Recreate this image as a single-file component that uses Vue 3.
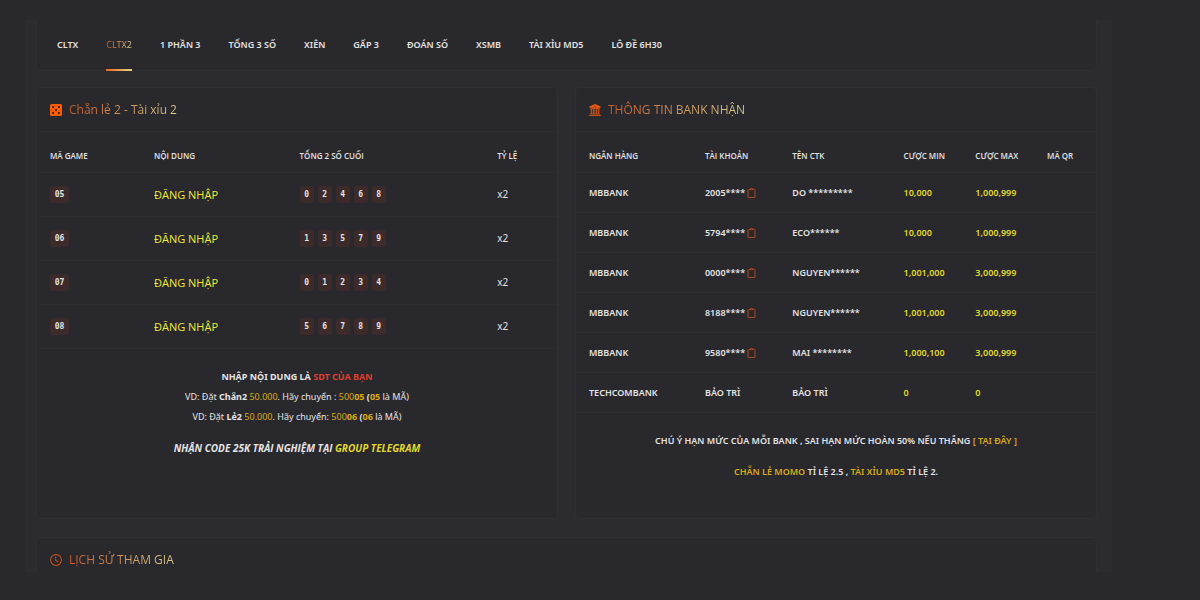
<script setup>
import { ref } from 'vue'

const tabs = ['CLTX', 'CLTX2', '1 PHẦN 3', 'TỔNG 3 SỐ', 'XIÊN', 'GẤP 3', 'ĐOÁN SỐ', 'XSMB', 'TÀI XỈU MD5', 'LÔ ĐỀ 6H30']
const active = ref('CLTX2')

const games = [
  { code: '05', digits: ['0', '2', '4', '6', '8'] },
  { code: '06', digits: ['1', '3', '5', '7', '9'] },
  { code: '07', digits: ['0', '1', '2', '3', '4'] },
  { code: '08', digits: ['5', '6', '7', '8', '9'] },
]

const banks = [
  { bank: 'MBBANK', account: '2005****', owner: 'DO *********', min: '10,000', max: '1,000,999', copy: true },
  { bank: 'MBBANK', account: '5794****', owner: 'ECO******', min: '10,000', max: '1,000,999', copy: true },
  { bank: 'MBBANK', account: '0000****', owner: 'NGUYEN******', min: '1,001,000', max: '3,000,999', copy: true },
  { bank: 'MBBANK', account: '8188****', owner: 'NGUYEN******', min: '1,001,000', max: '3,000,999', copy: true },
  { bank: 'MBBANK', account: '9580****', owner: 'MAI ********', min: '1,000,100', max: '3,000,999', copy: true },
  { bank: 'TECHCOMBANK', account: 'BẢO TRÌ', owner: 'BẢO TRÌ', min: '0', max: '0', copy: false },
]
</script>

<template>
  <div class="page">
    <main class="shell">
      <nav class="tabs">
        <button
          v-for="tab in tabs"
          :key="tab"
          type="button"
          class="tab"
          :class="{ active: tab === active }"
          @click="active = tab"
        ><span>{{ tab }}</span></button>
      </nav>

      <div class="panels">
        <section class="panel">
          <h2 class="title">
            <svg class="icon" viewBox="0 0 16 16" aria-hidden="true">
              <rect width="16" height="16" rx="2" fill="#ff5c00" />
              <g fill="#2b1c18">
                <rect x="2.8" y="2.8" width="2.6" height="2.6" rx="1" />
                <rect x="10.6" y="2.8" width="2.6" height="2.6" rx="1" />
                <rect x="6.7" y="6.7" width="2.6" height="2.6" rx="1" />
                <rect x="2.8" y="10.6" width="2.6" height="2.6" rx="1" />
                <rect x="10.6" y="10.6" width="2.6" height="2.6" rx="1" />
              </g>
            </svg>
            <span class="gradient">Chẵn lẻ 2 - Tài xỉu 2</span>
          </h2>
          <table class="games">
            <thead>
              <tr><th>MÃ GAME</th><th>NỘI DUNG</th><th>TỔNG 2 SỐ CUỐI</th><th>TỶ LỆ</th></tr>
            </thead>
            <tbody>
              <tr v-for="game in games" :key="game.code">
                <td><code class="chip wide">{{ game.code }}</code></td>
                <td><a href="#" class="login">ĐĂNG NHẬP</a></td>
                <td><div class="digits"><code v-for="d in game.digits" :key="d" class="chip">{{ d }}</code></div></td>
                <td>x2</td>
              </tr>
            </tbody>
          </table>
          <div class="guide">
            <p><b>NHẬP NỘI DUNG LÀ <span class="red">SDT CỦA BẠN</span></b></p>
            <p>VD: Đặt <b>Chẵn2</b> <span class="gold">50.000</span>. Hãy chuyển : <span class="gold">500<b>05</b></span> <b>(<span class="gold">05</span></b> là MÃ)</p>
            <p>VD: Đặt <b>Lẻ2</b> <span class="gold">50.000</span>. Hãy chuyển: <span class="gold">500<b>06</b></span> <b>(<span class="gold">06</span></b> là MÃ)</p>
            <p class="promo">NHẬN CODE 25K TRẢI NGHIỆM TẠI <a href="#" class="yellow">GROUP TELEGRAM</a></p>
          </div>
        </section>

        <section class="panel">
          <h2 class="title">
            <svg class="icon" viewBox="0 0 16 16" fill="#f05a10" aria-hidden="true">
              <path d="M8 0 L15.4 3.2 V5 H0.6 V3.2 Z M1.6 5.5 H14.4 V6.6 H1.6 Z" />
              <path d="M2.2 6.5 H4.3 V13 H2.2 Z M5.3 6.5 H7.3 V13 H5.3 Z M8.7 6.5 H10.7 V13 H8.7 Z M11.7 6.5 H13.8 V13 H11.7 Z" opacity=".75" />
              <path d="M1.2 12.8 H14.8 V14 H1.2 Z M0 14.6 H16 V16 H0 Z" opacity=".8" />
              <circle cx="8" cy="3" r="0.9" fill="#6b2c16" />
            </svg>
            <span class="gradient">THÔNG TIN BANK NHẬN</span>
          </h2>
          <table class="banks">
            <thead>
              <tr><th>NGÂN HÀNG</th><th>TÀI KHOẢN</th><th>TÊN CTK</th><th>CƯỢC MIN</th><th>CƯỢC MAX</th><th>MÃ QR</th></tr>
            </thead>
            <tbody>
              <tr v-for="row in banks" :key="row.bank + row.account">
                <td>{{ row.bank }}</td>
                <td>{{ row.account }}<button v-if="row.copy" type="button" class="copy" aria-label="Copy">
                  <svg viewBox="0 0 9 10" fill="none" stroke="#b3481f" aria-hidden="true">
                    <path d="M3 1.5 H1.5 L1 2 V9 L1.5 9.5 H7.5 L8 9 V2 L7.5 1.5 H6" />
                    <path d="M3 1 H6" stroke-width="1.6" />
                  </svg>
                </button></td>
                <td>{{ row.owner }}</td>
                <td class="yellow">{{ row.min }}</td>
                <td class="yellow">{{ row.max }}</td>
                <td></td>
              </tr>
            </tbody>
          </table>
          <div class="notice">
            <p>CHÚ Ý HẠN MỨC CỦA MỖI BANK , SAI HẠN MỨC HOÀN 50% NẾU THẮNG <a href="#" class="gold">[ TẠI ĐÂY ]</a></p>
            <p><a href="#" class="gold">CHẴN LẺ MOMO</a> TỈ LỆ 2.5 , <a href="#" class="gold">TÀI XỈU MD5</a> TỈ LỆ 2.</p>
          </div>
        </section>
      </div>

      <section class="panel history">
        <h2 class="title">
          <svg class="icon" viewBox="0 0 16 16" fill="none" stroke="#c94e1c" stroke-width="1.4" stroke-linecap="round" aria-hidden="true">
            <circle cx="8" cy="8" r="7.2" />
            <path d="M7.6 4 V8.6 L10.8 10.4" />
          </svg>
          <span class="gradient">LỊCH SỬ THAM GIA</span>
        </h2>
      </section>
    </main>
  </div>
</template>

<style>
body {
  background: #29282d;
}
</style>

<style scoped>
.page {
  padding: 20px 88px 28px 25px;
  font-family: "Noto Sans", "Open Sans", sans-serif;
  font-size: 9px;
  color: #e4e4e4;
  background: #29282d;
}
.shell {
  padding: 0 15px 0 11px;
  background: #2c2b30;
}
.tabs {
  display: flex;
  gap: 28px;
  padding: 0 20px;
  border: 1px solid #302f34;
  border-top: 0;
  border-radius: 0 0 5px 5px;
  background: #29282d;
}
.tab {
  height: 51px;
  margin-bottom: -1px;
  padding: 0;
  border: 0;
  border-bottom: 2px solid transparent;
  background: none;
  font: 600 9px/48px "Noto Sans", "Open Sans", sans-serif;
  color: #e4e4e4;
  white-space: nowrap;
  cursor: pointer;
}
.tab.active {
  font-weight: 400;
  border-image: linear-gradient(90deg, #e8641c, #e6d98a) 1;
}
.tab.active span,
.gradient {
  background: linear-gradient(90deg, #c85a28, #d8cc8c);
  background-clip: text;
  -webkit-background-clip: text;
  color: transparent;
}
.panels {
  display: grid;
  grid-template-columns: 1fr 1fr;
  gap: 17px;
  margin: 16px 0 18px;
}
.panel {
  border: 1px solid #302f34;
  border-radius: 5px;
  background: #29282d;
}
.title {
  display: flex;
  align-items: center;
  gap: 7px;
  height: 43px;
  margin: 0;
  padding: 0 13px;
  font: 400 12px "Open Sans", "Noto Sans", sans-serif;
  border-bottom: 1px solid #2d2c31;
}
.icon {
  width: 12px;
  height: 12px;
}
table {
  width: 100%;
  table-layout: fixed;
  border-collapse: collapse;
}
th,
td {
  padding: 0 0 0 13px;
  border-bottom: 1px solid #2d2c31;
  text-align: left;
  white-space: nowrap;
}
th {
  height: 40px;
  padding-top: 7px;
  box-sizing: border-box;
  font: 600 8px "Open Sans", "Noto Sans", sans-serif;
}
.games td {
  height: 43px;
}
.games td:last-child {
  font-size: 10px;
}
.games th:nth-child(1) { width: 20%; }
.games th:nth-child(2) { width: 28%; }
.games th:nth-child(3) { width: 38%; }
.banks th:nth-child(1) { width: 22.3%; }
.banks th:nth-child(2) { width: 16.8%; }
.banks th:nth-child(3) { width: 21.4%; }
.banks th:nth-child(4),
.banks th:nth-child(5) { width: 13.8%; }
.banks td {
  height: 39px;
  font-weight: 600;
}
.chip {
  display: inline-block;
  width: 14px;
  border-radius: 3px;
  background: #3c2b2a;
  font: 700 8px/17px "DejaVu Sans Mono", monospace;
  text-align: center;
  vertical-align: middle;
}
.chip.wide {
  width: 19px;
}
.digits {
  display: flex;
  gap: 4px;
}
a {
  text-decoration: none;
}
.login {
  font: 400 11px "Open Sans", "Noto Sans", sans-serif;
  color: #f0ea3c;
}
.yellow {
  color: #e0d82c;
}
.gold {
  color: #d9ab16;
}
.red {
  color: #e03c2c;
}
.copy {
  width: 9px;
  height: 10px;
  margin-left: 2px;
  padding: 0;
  border: 0;
  background: none;
  vertical-align: middle;
  cursor: pointer;
}
.copy svg {
  display: block;
  width: 9px;
  height: 10px;
}
.guide,
.notice {
  text-align: center;
}
.guide {
  padding-top: 18px;
}
.guide p {
  margin: 0;
  line-height: 20px;
}
.guide .promo {
  margin-top: 11px;
  font: italic 700 10px/20px "Open Sans", "Noto Sans", sans-serif;
}
.notice {
  padding: 18px 0 25px;
  font-weight: 600;
}
.notice p {
  margin: 0 0 11px;
  line-height: 20px;
}
.history {
  border-bottom: 0;
  border-radius: 5px 5px 0 0;
}
.history .title {
  height: 34px;
  padding-top: 10px;
  box-sizing: border-box;
  border: 0;
}
</style>
